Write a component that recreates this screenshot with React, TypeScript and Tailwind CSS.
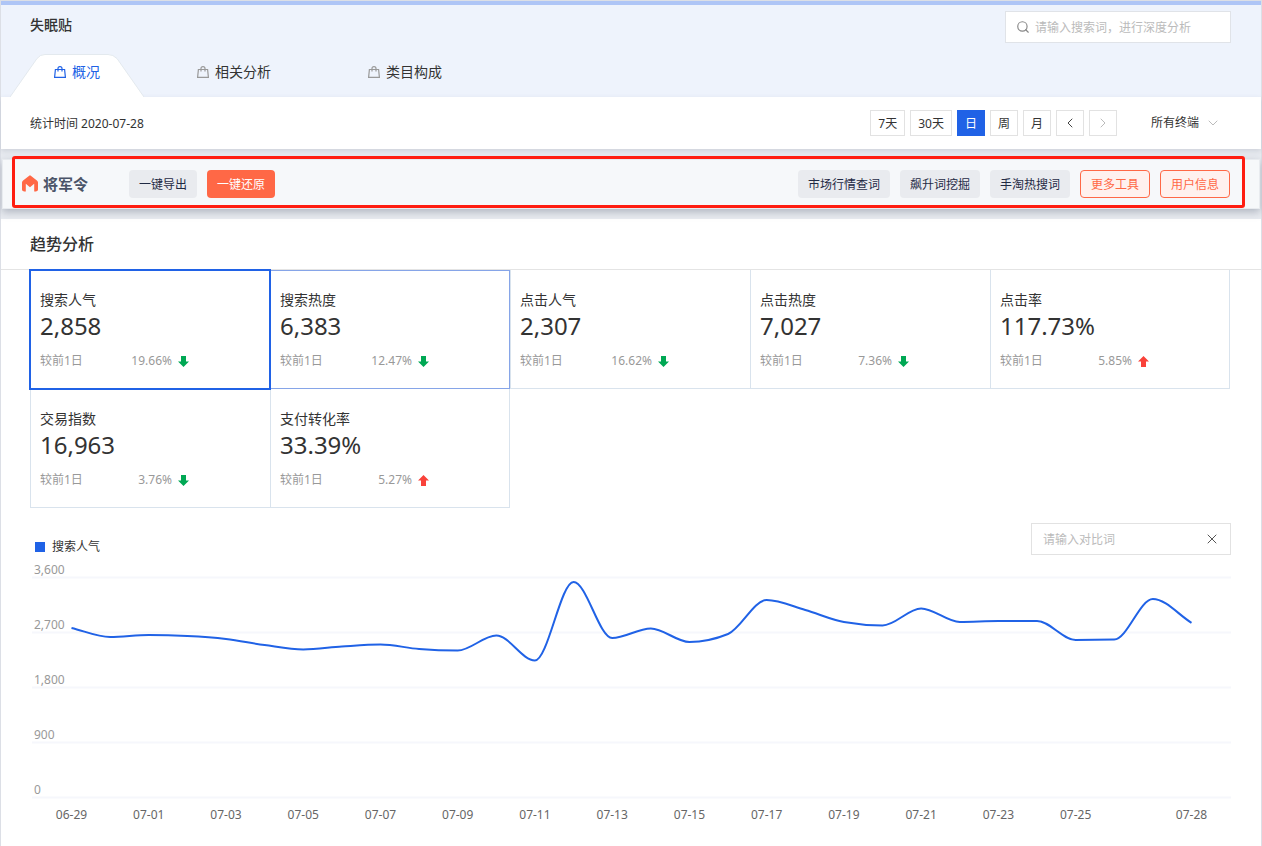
import React, { useState } from 'react'
import { Search, X, ChevronLeft, ChevronRight, ChevronDown } from 'lucide-react'
import clsx from 'clsx'

const tabs = ['概况', '相关分析', '类目构成']
const periods = ['7天', '30天', '日', '周', '月']

const metrics = [
  { name: '搜索人气', value: '2,858', change: '19.66%', up: false },
  { name: '搜索热度', value: '6,383', change: '12.47%', up: false },
  { name: '点击人气', value: '2,307', change: '16.62%', up: false },
  { name: '点击热度', value: '7,027', change: '7.36%', up: false },
  { name: '点击率', value: '117.73%', change: '5.85%', up: true },
  { name: '交易指数', value: '16,963', change: '3.76%', up: false },
  { name: '支付转化率', value: '33.39%', change: '5.27%', up: true },
]

// 06-29 to 07-28, one value a day
const trend = [
  2774, 2626, 2659, 2643, 2594, 2495, 2422, 2471, 2504, 2430, 2405, 2651, 2242, 3527, 2610,
  2765, 2545, 2675, 3232, 3068, 2872, 2815, 3093, 2872, 2888, 2888, 2577, 2585, 3248, 2858,
]

const dayLabel = (i: number) => (i < 2 ? `06-${29 + i}` : `07-${String(i - 1).padStart(2, '0')}`)

const xLabels = [0, 2, 4, 6, 8, 10, 12, 14, 16, 18, 20, 22, 24, 26, 29]

const px = (i: number) => 41.5 + (i * 1120) / 29
const py = (v: number) => 242.5 - (v / 3600) * 220

// monotone cubic, so the line never overshoots a day's value
const linePath = (values: number[]) => {
  const step = 1120 / 29
  const ys = values.map(py)
  const d = ys.slice(1).map((y, i) => (y - ys[i]) / step)
  const m = ys.map((_, i) => {
    if (i === 0) return d[0]
    if (i === ys.length - 1) return d[i - 1]
    const a = d[i - 1]
    const b = d[i]
    if (a * b <= 0) return 0
    return Math.sign(a) * Math.min(Math.abs(a), Math.abs(b), Math.abs(a + b) / 4) * 2
  })
  let path = `M${px(0)},${ys[0]}`
  for (let i = 1; i < ys.length; i++) {
    const c = step / 3
    path += `C${px(i - 1) + c},${ys[i - 1] + m[i - 1] * c} ${px(i) - c},${ys[i] - m[i] * c} ${px(i)},${ys[i]}`
  }
  return path
}

const BagIcon = () => (
  <svg width="12" height="12" viewBox="0 0 12 12" fill="none" stroke="currentColor" strokeWidth="1.2" aria-hidden="true">
    <path d="M1.4 3.5h9.2l.8 7.9H.6z" />
    <path d="M4 5.6V2.6Q4 .6 6 .6T8 2.6V5.6" />
  </svg>
)

const Logo = () => (
  <svg width="16" height="17" viewBox="0 0 16 17" aria-hidden="true">
    <path
      d="M7.2 0.7Q8 0 8.8 0.7L14.9 5.4Q16 6.3 16 7.6V14.5Q16 16.5 12.2 16.5V8.8L8 12.2 3.8 8.8V16.5Q0 16.5 0 14.5V7.6Q0 6.3 1.1 5.4Z"
      fill="#ff6846"
    />
  </svg>
)

const Arrow = ({ up }: { up: boolean }) => (
  <svg
    width="11"
    height="11"
    viewBox="0 0 11 11"
    className={up ? 'text-[#f9423a]' : 'rotate-180 text-[#00a854]'}
    aria-hidden="true"
  >
    <path d="M5.5 0 11 5.5H8V11H3V5.5H0Z" fill="currentColor" />
  </svg>
)

const toolClass = 'h-7 rounded bg-[#e9ebef] px-2.5 pt-0.5 text-[#1f2a44]'
const outlineClass = 'h-7 rounded border border-[#ff6846] bg-[#fff1ee] px-2.5 pt-0.5 text-[#ff6846]'

const Header = () => {
  const [active, setActive] = useState(0)
  return (
    <header className="border-t-4 border-[#aec5f6] bg-[#eef3fc]">
      <div className="flex h-[49px] items-start justify-between pl-[29px] pr-[30px]">
        <h1 className="pt-2.5 text-sm leading-5 font-medium">失眠贴</h1>
        <label className="mt-1.5 flex h-8 w-[226px] items-center gap-[5px] border border-[#e0e3e8] bg-white px-2.5">
          <Search className="size-3.5 text-[#888]" aria-label="搜索" />
          <input
            type="text"
            placeholder="请输入搜索词，进行深度分析"
            className="min-w-0 flex-1 pt-0.5 outline-none placeholder:text-[#bbb]"
          />
        </label>
      </div>
      <nav className="flex gap-[9px] pl-[9px]">
        {tabs.map((tab, i) => (
          <button
            key={tab}
            onClick={() => setActive(i)}
            className={clsx('relative h-[43px] px-11 pb-2 text-sm', i === active && 'text-[#2062e6]')}
          >
            {i === active && (
              <svg
                viewBox="0 0 134 43"
                preserveAspectRatio="none"
                className="absolute inset-0 size-full"
                aria-hidden="true"
              >
                <path d="M0 43 27 4.5Q30 .5 35 .5H98Q103 .5 107 4.5L134 43" fill="#fff" stroke="#e3e9ee" />
              </svg>
            )}
            <span className="relative flex items-center gap-1.5">
              <span className={i === active ? '' : 'text-[#999]'}>
                <BagIcon />
              </span>
              {tab}
            </span>
          </button>
        ))}
      </nav>
    </header>
  )
}

const FilterBar = () => {
  const [period, setPeriod] = useState('日')
  return (
    <div className="flex h-[52px] items-center justify-between bg-white pl-[29px] pr-10 shadow-[0_2px_5px_rgba(100,110,130,0.2)]">
      <p className="pt-0.5">统计时间 2020-07-28</p>
      <div className="flex items-center gap-[5px]">
        {periods.map((p) => (
          <button
            key={p}
            onClick={() => setPeriod(p)}
            className={clsx(
              'h-[26px] min-w-7 border px-[7px] pt-0.5',
              p === period ? 'border-[#2062e6] bg-[#2062e6] text-white' : 'border-[#e2e2e2] bg-white'
            )}
          >
            {p}
          </button>
        ))}
        <button aria-label="前一天" className="flex h-[26px] w-7 items-center justify-center border border-[#e2e2e2]">
          <ChevronLeft className="size-4 text-[#444]" strokeWidth={1.5} />
        </button>
        <button aria-label="后一天" className="flex h-[26px] w-7 items-center justify-center border border-[#e2e2e2]">
          <ChevronRight className="size-4 text-[#bbb]" strokeWidth={1.5} />
        </button>
        <label className="ml-[29px] flex items-center gap-1.5">
          <select aria-label="终端" className="w-12 appearance-none bg-transparent outline-none">
            <option>所有终端</option>
            <option>PC端</option>
            <option>无线端</option>
          </select>
          <ChevronDown className="size-4 text-[#bbb]" strokeWidth={1.5} />
        </label>
      </div>
    </div>
  )
}

const Toolbar = () => (
  <div className="relative mx-px my-2.5 flex h-[50px] items-center justify-between border border-[#e8ebef] bg-[#f6f8fa] pl-[19px] pr-[29px] shadow-[0_3px_8px_rgba(90,100,120,0.4)]">
    <div className="flex items-center gap-2.5">
      <div className="mr-[31px] flex items-center gap-[5px]">
        <Logo />
        <span className="text-[15px] font-bold text-[#4a5468]">将军令</span>
      </div>
      <button className={toolClass}>一键导出</button>
      <button className="h-7 rounded bg-[#ff6846] px-2.5 pt-0.5 text-white">一键还原</button>
    </div>
    <div className="flex items-center gap-2.5">
      <button className={toolClass}>市场行情查词</button>
      <button className={toolClass}>飙升词挖掘</button>
      <button className={toolClass}>手淘热搜词</button>
      <button className={outlineClass}>更多工具</button>
      <button className={outlineClass}>用户信息</button>
    </div>
    {/* highlight frame */}
    <div className="pointer-events-none absolute -top-1 right-3.5 bottom-0 left-[9px] rounded-[3px] border-3 border-[#ff1d10]" />
  </div>
)

const Metrics = () => {
  const [selected, setSelected] = useState(0)
  return (
    <div className="mr-px grid grid-cols-5">
      {metrics.map((m, i) => (
        <button
          key={m.name}
          onClick={() => setSelected(i)}
          className={clsx(
            'relative flex h-[119px] flex-col items-start border-b border-l border-[#d9e3ed] pt-5 pl-[9px] last:border-r nth-[5]:border-r',
            i === selected && 'z-10 outline-2 -outline-offset-1 outline-[#2062e6]',
            i === 1 && 'outline -outline-offset-1 outline-[#86a5e8]'
          )}
        >
          <span className="text-sm leading-5">{m.name}</span>
          <span className="text-2xl leading-8">{m.value}</span>
          <span className="mt-2.5 flex items-center leading-[18px] text-[#999]">
            <span className="w-[60px] text-left">较前1日</span>
            <span className="mr-1.5 w-[72px] text-right">{m.change}</span>
            <Arrow up={m.up} />
          </span>
        </button>
      ))}
    </div>
  )
}

const Chart = () => (
  <svg viewBox="0 0 1201 291" className="block w-full text-xs" role="img" aria-label="搜索人气趋势">
    {[3600, 2700, 1800, 900, 0].map((v) => (
      <g key={v}>
        <line x1="2" x2="1201" y1={py(v)} y2={py(v)} stroke="#f6f7fc" strokeWidth="2" />
        <text x="4" y={py(v) - 4} fill="#999">
          {v.toLocaleString('en-US')}
        </text>
      </g>
    ))}
    {xLabels.map((i) => (
      <text key={i} x={px(i)} y="264" textAnchor="middle" fill="#666">
        {dayLabel(i)}
      </text>
    ))}
    <path d={linePath(trend)} fill="none" stroke="#2062e6" strokeWidth="2" />
  </svg>
)

const App = () => {
  return (
    <div className="min-h-screen border-x border-t border-[#dcdfe6] bg-[#e8ebf0] font-['Noto_Sans','Noto_Sans_CJK_SC',sans-serif] text-xs text-[#333]">
      <Header />
      <FilterBar />
      <Toolbar />
      <main className="bg-white">
        <h2 className="flex h-[51px] items-center border-b border-[#e4e4e4] pl-[29px] text-base font-medium">
          趋势分析
        </h2>
        <section className="pr-[30px] pl-[29px]">
          <Metrics />
          <div className="flex justify-between pt-[15px]">
            <div className="flex h-8 items-end pl-[5px]">
              <span className="flex items-center gap-[7px]">
                <i className="size-2.5 bg-[#2062e6]" />
                搜索人气
              </span>
            </div>
            <label className="flex h-8 w-[200px] items-center border border-[#e2e2e2] pr-2.5 pl-[11px]">
              <input
                type="text"
                aria-label="对比词"
                placeholder="请输入对比词"
                className="min-w-0 flex-1 pt-0.5 outline-none placeholder:text-[#bbb]"
              />
              <button aria-label="清空">
                <X className="size-4 text-[#555]" strokeWidth={1.5} />
              </button>
            </label>
          </div>
          <Chart />
        </section>
      </main>
    </div>
  )
}

export default App
